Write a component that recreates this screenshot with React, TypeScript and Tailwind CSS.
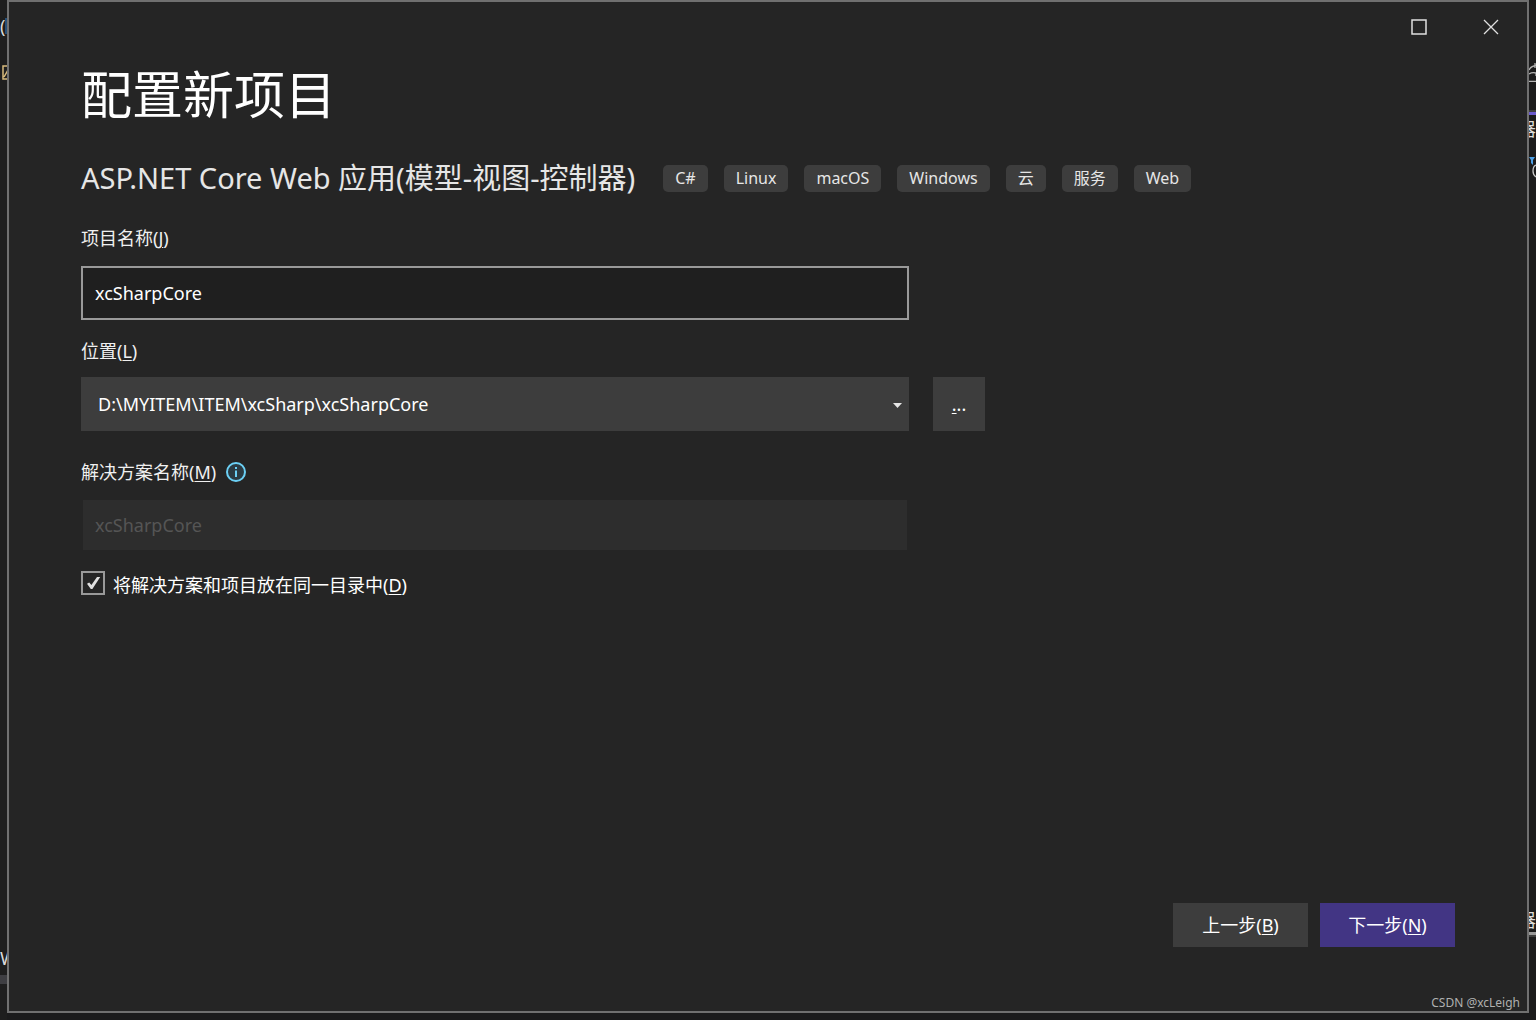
import { useState } from "react";
import type { ReactNode } from "react";

const TAGS = ["C#", "Linux", "macOS", "Windows", "云", "服务", "Web"];

const LOCATIONS = ["D:\\MYITEM\\ITEM\\xcSharp\\xcSharpCore"];

// 带下划线的快捷键
function AccessKey({ children }: { children: ReactNode }) {
  return (
    <>
      (<u className="decoration-1 underline-offset-2">{children}</u>)
    </>
  );
}

// 窗口左侧露出的编辑器
function EditorLeft() {
  return (
    <div aria-hidden="true" className="flex w-[7px] shrink-0 flex-col overflow-hidden bg-[#1e1e1e] text-lg leading-6 text-[#dcdcdc]">
      <div className="mt-3.5 flex">
        <span>(</span>
        <span className="mt-1 h-4 w-2 shrink-0 bg-[#264f78]" />
      </div>
      <svg className="mt-[27px] h-4 w-5 shrink-0" viewBox="0 0 20 16" fill="none" stroke="#d7ba7d" strokeWidth="1.5">
        <path d="M3 1h14v13H3zM4 12l4-7 3 4" />
      </svg>
      <div className="mt-auto">W</div>
      <div className="mt-[5px] mb-9 h-[9px] bg-[#3e3e42]" />
    </div>
  );
}

// 窗口右侧露出的解决方案资源管理器
function EditorRight() {
  return (
    <div aria-hidden="true" className="flex w-[7px] shrink-0 flex-col overflow-hidden bg-[#1b1b1c] text-lg leading-6 text-[#dcdcdc]">
      <svg className="mt-[62px] h-5 w-[7px] shrink-0" viewBox="0 0 7 20" fill="none" stroke="#b4b4b4" strokeWidth="1.3">
        <path d="M0 8Q2 4 7 3.5M6 1V6M0 12Q3 10 7 11V14M0 19.3H7" />
      </svg>
      <div className="mt-7 h-[2px] shrink-0 bg-[#3d3d3d]" />
      <div className="h-[3px] shrink-0 bg-[#6a5acd]" />
      <div className="mt-0.5 flex justify-end">
        <span>器</span>
      </div>
      <svg className="mt-4 h-6 w-[7px] shrink-0" viewBox="0 0 7 24" fill="none">
        <path d="M0 0H6L4 3V8L2 6V3Z" fill="#4c9fe6" />
        <path d="M7 8Q4 9 4 14Q4 18 7 20" stroke="#c8c8c8" strokeWidth="1.3" />
      </svg>
      <div className="mt-auto flex justify-end">
        <span>器</span>
      </div>
      <div className="h-[3px] shrink-0 bg-[#999999]" />
      <div className="mb-[83px] h-[2px] shrink-0 bg-[#3d3d3d]" />
    </div>
  );
}

export default function App() {
  const [name, setName] = useState("xcSharpCore");
  const [location, setLocation] = useState(LOCATIONS[0]);
  const [sameDir, setSameDir] = useState(true);

  return (
    <div className="relative flex min-h-screen bg-[#1b1b1c] font-['Noto_Sans','Noto_Sans_CJK_SC',sans-serif]">
      <EditorLeft />
      <main className="mb-[7px] flex min-w-0 flex-1 flex-col border-2 border-[#707070] bg-[#252525] text-lg text-[#f0f0f0]">
        <div className="flex justify-end">
          <button type="button" aria-label="最大化" className="flex h-[50px] w-[72px] items-center justify-center">
            <svg className="size-4" viewBox="0 0 16 16" fill="none" stroke="#e0e0e0" strokeWidth="1.5">
              <rect x="1" y="1" width="14" height="14" />
            </svg>
          </button>
          <button type="button" aria-label="关闭" className="flex h-[50px] w-[72px] items-center justify-center">
            <svg className="size-4" viewBox="0 0 16 16" fill="none" stroke="#e0e0e0" strokeWidth="1.3">
              <path d="M1 1l14 14M15 1L1 15" />
            </svg>
          </button>
        </div>

        <form className="flex flex-1 flex-col px-[72px] pb-16" onSubmit={(e) => e.preventDefault()}>
          <h1 className="mt-3 text-[51px] leading-[60px] text-white">配置新项目</h1>

          <div className="mt-9 flex flex-wrap items-center gap-x-7">
            <h2 className="text-[29px] leading-9 text-[#e6e6e6]">ASP.NET Core Web 应用(模型-视图-控制器)</h2>
            <ul className="flex flex-wrap gap-4">
              {TAGS.map((tag) => (
                <li key={tag} className="rounded-[5px] bg-[#3d3d3d] px-3 text-base leading-[27px] text-[#e6e6e6]">
                  {tag}
                </li>
              ))}
            </ul>
          </div>

          <label htmlFor="name" className="mt-7 mb-3.5 self-start leading-7">
            项目名称<AccessKey>J</AccessKey>
          </label>
          <input
            id="name"
            type="text"
            value={name}
            onChange={(e) => setName(e.target.value)}
            className="h-[54px] w-full max-w-[828px] border-2 border-[#999999] bg-[#1f1f1f] px-3 text-white outline-none"
          />

          <label htmlFor="location" className="mt-[17px] mb-3 self-start leading-7">
            位置<AccessKey>L</AccessKey>
          </label>
          <div className="flex gap-6">
            <div className="relative w-full max-w-[828px]">
              <select
                id="location"
                value={location}
                onChange={(e) => setLocation(e.target.value)}
                className="h-[54px] w-full appearance-none bg-[#3d3d3d] px-[17px] text-white outline-none"
              >
                {LOCATIONS.map((path) => (
                  <option key={path} value={path}>
                    {path}
                  </option>
                ))}
              </select>
              <svg className="pointer-events-none absolute top-[26px] right-[7px] h-[5px] w-[9px]" viewBox="0 0 9 5" fill="#e6e6e6">
                <path d="M0 0H9L4.5 5Z" />
              </svg>
            </div>
            <button type="button" aria-label="浏览" className="h-[54px] w-[52px] shrink-0 bg-[#3d3d3d] text-white">
              <u className="decoration-1 underline-offset-2">.</u>..
            </button>
          </div>

          <div className="mt-[27px] mb-3 flex items-center gap-2.5">
            <label htmlFor="solution" className="leading-7">
              解决方案名称<AccessKey>M</AccessKey>
            </label>
            <svg className="size-5" viewBox="0 0 20 20" fill="none">
              <circle cx="10" cy="10" r="9" fill="#2b3a42" stroke="#6cd0f5" strokeWidth="2" />
              <path d="M9 8.5h2V15H9zM9 5h2v2H9z" fill="#6cd0f5" />
            </svg>
          </div>
          <input
            id="solution"
            type="text"
            value={name}
            disabled
            className="h-[54px] w-full max-w-[828px] border-2 border-[#252525] bg-[#2d2d2d] px-3 text-[#555555]"
          />

          <label className="mt-[19px] flex items-start gap-2 self-start leading-7 text-white">
            <span className="grid size-6">
              <input
                type="checkbox"
                checked={sameDir}
                onChange={(e) => setSameDir(e.target.checked)}
                className="col-start-1 row-start-1 size-6 appearance-none border-2 border-[#999999] bg-[#252525]"
              />
              {sameDir && (
                <svg className="pointer-events-none col-start-1 row-start-1 size-6" viewBox="0 0 24 24" fill="#e0e0e0">
                  <path d="M6 12.8L8.2 11.4L10.4 14L16 6H19.2L11.4 18H9.8Z" />
                </svg>
              )}
            </span>
            <span>
              将解决方案和项目放在同一目录中<AccessKey>D</AccessKey>
            </span>
          </label>

          <div className="mt-auto flex justify-end gap-3">
            <button type="button" className="h-11 w-[135px] bg-[#3d3d3d] text-white">
              上一步<AccessKey>B</AccessKey>
            </button>
            <button type="submit" className="h-11 w-[135px] bg-[#423584] text-white">
              下一步<AccessKey>N</AccessKey>
            </button>
          </div>
        </form>
      </main>
      <EditorRight />
      <div className="absolute right-4 bottom-[7px] text-xs leading-5 text-[#b0b0b0]">CSDN @xcLeigh</div>
    </div>
  );
}
